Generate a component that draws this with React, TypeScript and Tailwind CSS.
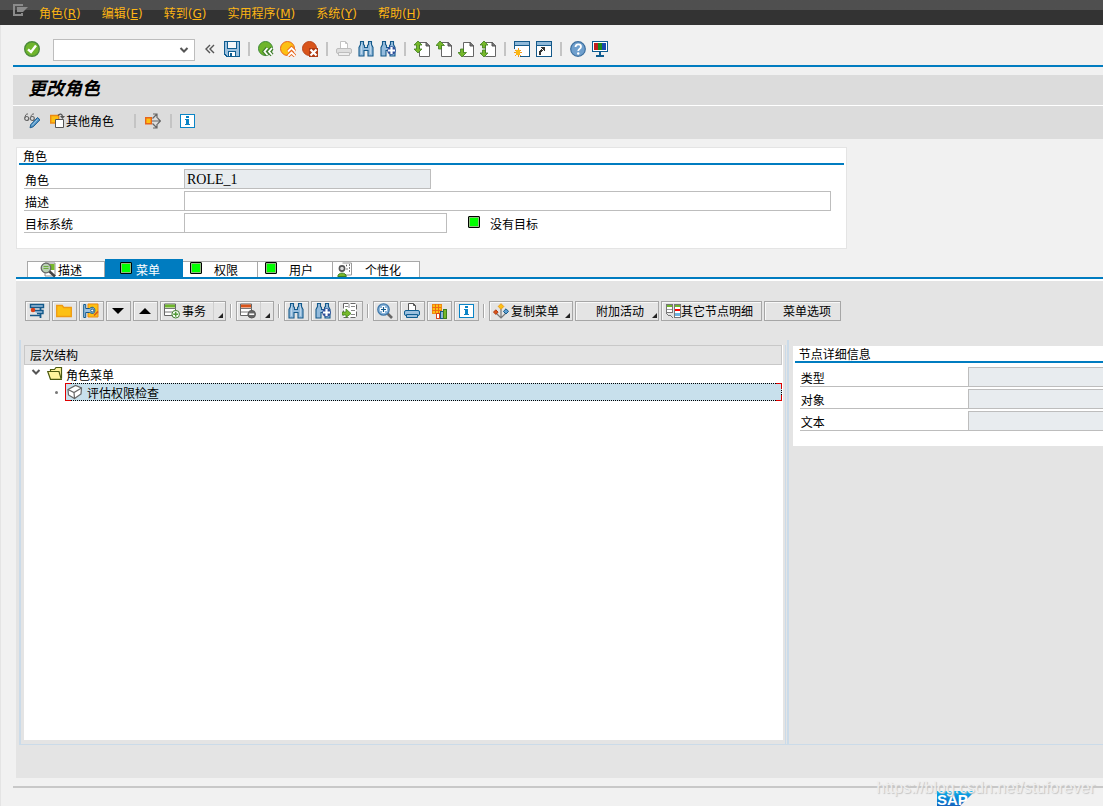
import type { ReactNode } from 'react';

interface ChildrenProps {
  readonly children?: ReactNode;
}

function Icon({ children, crisp = false }: ChildrenProps & { crisp?: boolean }) {
  return (
    <svg
      width="16"
      height="16"
      viewBox="0 0 16 16"
      fill="none"
      aria-hidden="true"
      className="shrink-0"
      shapeRendering={crisp ? 'crispEdges' : 'auto'}
    >
      {children}
    </svg>
  );
}

const CheckIcon = () => (
  <Icon>
    <circle cx="8" cy="8" r="7.3" fill="#6fb52c" stroke="#4b8a3c" strokeWidth="1.4" />
    <path d="M4 8.4 7 11l5-6.4" stroke="#fff" strokeWidth="2.4" />
  </Icon>
);

const SaveIcon = () => (
  <Icon crisp>
    <path d="M0 0h16v16H2l-2-2z" fill="#0f5d91" />
    <path d="M1 1h2v7h10V1h2v14h-3v-5H4v5H3l-2-2z" fill="#9cc0de" />
    <path d="M4 1h8v6H4z" fill="#f4f7fa" />
    <path d="M5 11h6v4H5z" fill="#fff" />
    <path d="M6 12h2v3H6z" fill="#0f5d91" />
  </Icon>
);

const BackIcon = () => (
  <Icon>
    <circle cx="7.5" cy="7.5" r="7" fill="#6fb52c" stroke="#3f8a3a" />
    <path d="M9.5 7l-3 3.5 3 3.5M14 7l-3 3.5 3 3.5" stroke="#3f7d2c" strokeWidth="4" />
    <path d="M9.5 7l-3 3.5 3 3.5M14 7l-3 3.5 3 3.5" stroke="#fff" strokeWidth="1.8" />
  </Icon>
);

const ExitIcon = () => (
  <Icon>
    <circle cx="7.5" cy="7.5" r="7" fill="#fcc013" stroke="#e8641b" />
    <path d="M8 10.5 11.5 7l3.500 3.500M8 15l3.500-3.500L15 15" stroke="#e8641b" strokeWidth="3.6" />
    <path d="M8 10.5 11.5 7l3.500 3.500M8 15l3.500-3.500L15 15" stroke="#fff" strokeWidth="1.8" />
  </Icon>
);

const CancelIcon = () => (
  <Icon>
    <circle cx="7.5" cy="7.5" r="7" fill="#d9541a" stroke="#b9461c" />
    <path d="M7 7h9v9H7z" fill="#b03a12" />
    <path d="m8.5 8.5 6 6m0-6-6 6" stroke="#fff" strokeWidth="2.2" />
  </Icon>
);

const PrintIcon = ({ muted = false }: { muted?: boolean }) => (
  <Icon>
    <path d="M4.5 8V.5h5l2 2V8" fill="#fff" stroke={muted ? '#c2c2c2' : '#555'} />
    <path d="M9.5.5v2h2" stroke={muted ? '#c2c2c2' : '#555'} />
    <rect
      x=".5"
      y="7.5"
      width="15"
      height="5"
      rx="1.5"
      fill={muted ? '#dedede' : '#9cc0de'}
      stroke={muted ? '#bdbdbd' : '#0f5d91'}
    />
    <path d="M2.5 11.500h11v3h-11z" fill={muted ? '#eee' : '#9cc0de'} stroke={muted ? '#bdbdbd' : '#0f5d91'} />
  </Icon>
);

const Barrels = () => (
  <path
    d="M2.5.5h3v3l1 1v2h3v-2l1-1v-3h3v3l1.500 3v8.500h-5V9.500H6v5.500H1V6.500l1.500-3z"
    fill="#94bbdc"
    stroke="#14598a"
    strokeWidth="1.1"
  />
);

const FindIcon = () => (
  <Icon>
    <Barrels />
    <path d="M3.5 3v10M12.500 3v10" stroke="#bcd6ea" />
  </Icon>
);

const FindNextIcon = () => (
  <Icon>
    <Barrels />
    <circle cx="11.5" cy="9.5" r="4.3" fill="#2f4f9a" />
    <path d="M11.5 6v7M8 9.500h7" stroke="#fff" strokeWidth="2.2" />
  </Icon>
);

type PageMove = 'first' | 'prev' | 'next' | 'last';

const PAGE_ARROWS: Record<PageMove, string> = {
  first: 'M4 0l4 4H5.5v4H8l-4 4-4-4h2.5V4H0z',
  prev: 'M4 0l4.500 4.500h-3V8h-3V4.500H0z',
  next: 'M4 16l4.500-4.500h-3V8h-3v3.500H0z',
  last: 'M4 0l4 4H5.500v3h-3V4H0zM4 16l4-4H5.500V9h-3v3H0z',
};

function PageIcon({ move }: { move: PageMove }) {
  return (
    <Icon>
      <path d="M5.5 1.500h7l3 3v11h-10z" fill="#fff" stroke="#666" />
      <path d="M12 1v4h4" fill="#777" stroke="#555" />
      <path d={PAGE_ARROWS[move]} fill="#76b82a" stroke="#3f7d1e" strokeWidth=".8" />
    </Icon>
  );
}

const SessionIcon = () => (
  <Icon crisp>
    <path d="M0 0h16v16H0z" fill="#14598a" />
    <path d="M1 1h14v3H1z" fill="#8fb8d8" />
    <path d="M1 5h14v10H1z" fill="#fff" />
    <path d="M0 8h6v8H0z" fill="#f1f1f1" />
    <path d="M4 7v9M0 11.5h8M1 9l6 6m0-6-6 6" stroke="#f39a1b" />
    <path d="M2 9h4v5H2z" fill="#fcb813" />
  </Icon>
);

const ShortcutIcon = () => (
  <Icon crisp>
    <path d="M0 0h16v16H0z" fill="#14598a" />
    <path d="M1 1h14v3H1z" fill="#8fb8d8" />
    <path d="M1 5h14v10H1z" fill="#fff" />
    <path d="M3.500 14c0-3 1-4 3-5" stroke="#333" strokeWidth="2" />
    <path d="M4 6h5v5z" fill="#333" />
  </Icon>
);

const HelpIcon = () => (
  <Icon>
    <circle cx="8" cy="8" r="7.3" fill="#6f9fcd" stroke="#3c6f9f" strokeWidth="1.2" />
    <path d="M5.5 6c0-3.500 5.500-3.200 5.500-.3C11 7.800 8.200 8 8.200 10" stroke="#fff" strokeWidth="1.8" />
    <circle cx="8.2" cy="12.5" r="1.2" fill="#fff" />
  </Icon>
);

const MonitorIcon = () => (
  <Icon crisp>
    <path d="M0 0h16v11H0z" fill="#0f5d91" />
    <path d="M1 1h14v9H1z" fill="#fff" />
    <path d="M2 2h4v7H2z" fill="#c21d1d" />
    <path d="M6 2h4v7H6z" fill="#1b8a1b" />
    <path d="M10 2h4v7h-4z" fill="#1749b0" />
    <path d="M7 11h2v3h3v2H4v-2h3z" fill="#0f5d91" />
  </Icon>
);

const DisplayEditIcon = () => (
  <Icon>
    <path d="M1 5C1 2 2.500.500 4 1M7 4c0-2 1.500-3.500 3-3" stroke="#666" />
    <circle cx="2.700" cy="5.500" r="2" stroke="#666" strokeWidth="1.2" />
    <circle cx="8.300" cy="5.500" r="2" stroke="#666" strokeWidth="1.2" />
    <path d="m6 14.800.8-3.300 6.700-7L16 6.800l-6.800 7z" fill="#4d93c6" stroke="#215f91" />
    <path d="m8 12.500 5.500-6" stroke="#a5cbe6" />
  </Icon>
);

const OtherRoleIcon = () => (
  <Icon>
    <path d="M.7 2.500h8v7.500h-8z" fill="#fcc013" stroke="#ee8a12" strokeWidth="1.4" />
    <path d="M5.500 6.500h8v8h-8z" fill="#fff" stroke="#555" />
    <path d="M8 2.500c2-2.500 4-1.500 4.500 1" stroke="#555" strokeWidth="1.3" />
    <path d="M10 3h5l-2.500 3z" fill="#555" />
  </Icon>
);

const DistributeIcon = () => (
  <Icon>
    <path d="M.7 4.700h5.600v6H.7z" fill="#fcc013" stroke="#e8641b" strokeWidth="1.4" />
    <path
      d="M7 8h8M7.500 5.500l4-4M7.500 10.500l4 4M12.500 5l3 3-3 3M8 1h4v4M8 15h4v-4"
      stroke="#666"
      strokeWidth="1.2"
    />
  </Icon>
);

const InfoIcon = () => (
  <Icon crisp>
    <path d="M1 1h14v13H1z" fill="#fff" stroke="#0a84c6" />
    <path d="M7 3h3v2H7zM6 6h4v5h1v1H6v-1h1V7H6z" fill="#0a84c6" />
  </Icon>
);

const SearchDetailIcon = () => (
  <Icon>
    <path d="M5 1h10v13H5z" fill="#fff" stroke="#777" strokeWidth=".8" />
    <path d="M10 2h4.500v6H10z" fill="#76b82a" />
    <circle cx="6" cy="6" r="4.8" fill="#b9cfb4" stroke="#666" strokeWidth="1.3" />
    <path d="M3.5 4.500h5M3.500 6.500h5" stroke="#6fae3e" />
    <path d="m9.5 9.500 5.500 5" stroke="#444" strokeWidth="2.5" />
  </Icon>
);

const PersonalizeIcon = () => (
  <Icon>
    <path d="M5.5 1h9v12H8" stroke="#999" fill="#fff" />
    <circle cx="5" cy="6.5" r="2.6" fill="#ddd" stroke="#555" strokeWidth="1.6" />
    <path d="M.8 14.500c0-4.500 8.500-4.500 8.500 0z" fill="#76b82a" stroke="#3f7d1e" />
    <path d="M9 3.500h1M12 3h1M12 6h1M9.500 7h1M12 9h1" stroke="#555" strokeWidth="1.4" />
  </Icon>
);

const StructureIcon = () => (
  <Icon>
    <path d="M1.5 1.500h13v3h-13zM4 7.500h10v3H8M1 12.500h11" fill="#9cc0de" stroke="#14598a" strokeWidth="1.4" />
    <path d="M11.5 4v3.500M11.500 10.500V15" stroke="#14598a" strokeWidth="1.8" />
    <circle cx="4" cy="7" r="2.3" fill="#d9421a" />
  </Icon>
);

const FolderIcon = () => (
  <Icon>
    <path d="M.7 2.500h5.500l1.500 2h7.600v9H.7z" fill="#fcc013" stroke="#ee9a12" strokeWidth="1.3" />
  </Icon>
);

const AssignIcon = () => (
  <Icon>
    <path d="M5 1h10v13H5z" fill="#fcc013" stroke="#ee8a12" />
    <path d="M.7 1.500h2v4h4c3-3 6 0 5 3-1 3-3 2-5 1H2.700v5h-2z" fill="#9cc0de" stroke="#14598a" />
    <circle cx="9.2" cy="7.5" r="1.5" fill="#fff" stroke="#14598a" />
    <path d="m11 12.500 4-4" stroke="#d9541a" strokeWidth="1.5" />
  </Icon>
);

const DownIcon = () => (
  <Icon>
    <path d="M2 5h12l-6 6z" fill="#000" />
  </Icon>
);

const UpIcon = () => (
  <Icon>
    <path d="M2 11h12L8 5z" fill="#000" />
  </Icon>
);

function RowIcon({ kind }: { kind: 'insert' | 'delete' }) {
  const add = kind === 'insert';
  return (
    <Icon>
      <path d="M.5 1h11v11.500H.5z" fill="#fff" stroke="#666" />
      <path d="M1 1.500h10v3H1z" fill={add ? '#6fb52c' : '#d9541a'} />
      <path d="M1 5.500h11M1 9h7" stroke="#777" />
      <circle cx="11.7" cy="11.2" r="3.8" fill={add ? '#fff' : '#666'} stroke={add ? '#3f7d2c' : '#555'} />
      <path d="M9.200 11.200h5" stroke={add ? '#4f9b35' : '#fff'} strokeWidth="1.5" />
      {add && <path d="M11.7 8.700v5" stroke="#4f9b35" strokeWidth="1.5" />}
    </Icon>
  );
}

const ExpandIcon = () => (
  <Icon>
    <path d="M1.5.5h13v14h-13z" fill="#fff" stroke="#666" strokeDasharray="5 2" />
    <path d="M9 3.500h4M3 3.500h3M9 7.500h4M9 11.500h4M7 1v4" stroke="#888" />
    <path d="M0 9h4V6l5 4.500-5 4V12H0z" fill="#76b82a" stroke="#3f7d1e" strokeWidth=".8" />
  </Icon>
);

const ZoomIcon = () => (
  <Icon>
    <path d="m10.5 10.500 4.500 4.500" stroke="#666" strokeWidth="2.6" />
    <circle cx="6.5" cy="6.5" r="5.7" fill="#8fb8dc" stroke="#3f79ab" strokeWidth="1.3" />
    <path d="M6.5 3v7M3 6.500h7" stroke="#fff" strokeWidth="3" />
    <path d="M6.5 4v5M4 6.500h5" stroke="#14598a" strokeWidth="1.2" />
  </Icon>
);

const ChartIcon = () => (
  <Icon crisp>
    <path d="M1 1h9v9H1z" fill="#fcc013" stroke="#ee8a12" />
    <path d="M4 1v9M7 1v9M1 4h9M1 7h9" stroke="#ee6a12" />
    <path d="M5 10h3v5H5z" fill="#fff" stroke="#d9421a" />
    <path d="M9 8h3v7H9z" fill="#8fb8d8" stroke="#14598a" />
    <path d="M12 6h3v9h-3z" fill="#76b82a" stroke="#3f7d1e" />
  </Icon>
);

const CopyMenuIcon = () => (
  <Icon>
    <path d="M8 6v9M3 10l5 5 5-5" stroke="#777" strokeWidth="1.2" />
    <path d="m8 .7 2.800 2.800L8 6.300 5.200 3.500z" fill="#fcc013" stroke="#ee9a12" />
    <path d="m2.800 6.800 2.300 2.300-2.300 2.300L.500 9.100z" fill="#d9541a" stroke="#b03a12" />
    <path d="m13 5.800 2.600 2.600L13 11l-2.600-2.600z" fill="#5f9fd0" stroke="#14598a" />
  </Icon>
);

const NodeDetailIcon = () => (
  <Icon crisp>
    <path d="M1 1h6v8H1zM9 1h6v13H9z" fill="#fff" stroke="#777" />
    <path d="M2 2h5v2H2zM10 2h5v2h-5z" fill="#6fb52c" />
    <path d="M10 6h5v2h-5z" fill="#f00" />
    <path d="M10 10h5v3h-5z" fill="#6fb4e0" />
    <path d="M2 6.500h5" stroke="#999" />
    <path d="M1 10.500l7 4" stroke="#777" strokeDasharray="2 1" />
  </Icon>
);

const OpenFolderIcon = () => (
  <Icon>
    <path d="M3.500 6V3.500h4L9 1.500h5.500v11" fill="#fff59c" stroke="#4c5a10" strokeWidth="1.2" />
    <path d="M.7 5.500H12l2.300 7.800H3.500z" fill="#fff59c" stroke="#4c5a10" strokeWidth="1.2" />
  </Icon>
);

const BoxIcon = () => (
  <Icon>
    <path d="M1 5.500 8.500 1.500l6 2.500-.5 6-6.500 4.500L1.500 11z" fill="#fff" stroke="#666" strokeWidth="1.2" />
    <path d="M1 5.500 7 8.500l7.500-4.500M7 8.500l.5 6" stroke="#666" strokeWidth="1.2" />
  </Icon>
);

function ChevronDown({ className = '' }: { className?: string }) {
  return (
    <svg width="10" height="6" viewBox="0 0 10 6" fill="none" aria-hidden="true" className={className}>
      <path d="m1.5 1 3.500 3.500L8.500 1" stroke="#555" strokeWidth="2" />
    </svg>
  );
}

const Lamp = () => (
  <span className="block size-3 shrink-0 rounded-[1px] border border-black bg-[#00ff00] inset-ring inset-ring-[#8fbf7f]" />
);

const MENUS = [
  { label: '角色', hotkey: 'R' },
  { label: '编辑', hotkey: 'E' },
  { label: '转到', hotkey: 'G' },
  { label: '实用程序', hotkey: 'M' },
  { label: '系统', hotkey: 'Y' },
  { label: '帮助', hotkey: 'H' },
];

function MenuBar() {
  return (
    <header className="flex h-[25px] items-center bg-linear-to-b from-[#4f4f4f] from-40% to-[#333333] to-40% pl-3">
      <svg width="16" height="14" viewBox="0 0 16 14" fill="none" aria-hidden="true" className="mr-[11px] mb-1.5 shrink-0">
        <path d="M11 2H2v10h8v-2" stroke="#8b8b8b" strokeWidth="2" />
        <path d="M5 4h11l-5 5H5z" fill="#8b8b8b" />
      </svg>
      <nav className="flex gap-[21px] pt-0.5 whitespace-nowrap text-[#fdb515]">
        {MENUS.map((menu) => (
          <button key={menu.label} type="button">
            {menu.label}({<u>{menu.hotkey}</u>})
          </button>
        ))}
      </nav>
    </header>
  );
}

interface Tool {
  label: string;
  icon: ReactNode;
}

const TOOL_GROUPS: Tool[][] = [
  [{ label: '保存', icon: <SaveIcon /> }],
  [
    { label: '返回', icon: <BackIcon /> },
    { label: '退出', icon: <ExitIcon /> },
    { label: '取消', icon: <CancelIcon /> },
  ],
  [
    { label: '打印', icon: <PrintIcon muted /> },
    { label: '查找', icon: <FindIcon /> },
    { label: '查找下一个', icon: <FindNextIcon /> },
  ],
  [
    { label: '第一页', icon: <PageIcon move="first" /> },
    { label: '上一页', icon: <PageIcon move="prev" /> },
    { label: '下一页', icon: <PageIcon move="next" /> },
    { label: '最后一页', icon: <PageIcon move="last" /> },
  ],
  [
    { label: '新建会话', icon: <SessionIcon /> },
    { label: '创建快捷方式', icon: <ShortcutIcon /> },
  ],
  [
    { label: '帮助', icon: <HelpIcon /> },
    { label: '定制本地布局', icon: <MonitorIcon /> },
  ],
];

const Divider = () => <span className="mx-0.5 h-3.5 w-0.5 shrink-0 bg-[#c4c4c4]" />;

function SystemToolbar() {
  return (
    <div className="flex items-start border-b-2 border-[#007cc0] pt-3.5 pb-1 pl-[11px]">
      <button type="button" aria-label="回车" className="mt-0.5">
        <CheckIcon />
      </button>
      <div className="relative ml-[13px]">
        <select
          aria-label="命令"
          className="block h-[22px] w-[142px] appearance-none border border-[#bdbdbd] bg-white px-1 outline-none"
        />
        <ChevronDown className="pointer-events-none absolute top-2 right-1.5" />
      </div>
      <button type="button" aria-label="隐藏命令字段" className="mt-[5px] mr-[9px] ml-2.5">
        <svg width="10" height="10" viewBox="0 0 10 10" fill="none" aria-hidden="true">
          <path d="M5 1 1 5l4 4M9 1 5 5l4 4" stroke="#555" strokeWidth="1.4" />
        </svg>
      </button>
      <div className="mt-0.5 flex items-center gap-1.5">
        {TOOL_GROUPS.map((group, i) => (
          <div key={group[0].label} className="flex items-center gap-1.5">
            {i > 0 && <Divider />}
            {group.map((tool) => (
              <button key={tool.label} type="button" aria-label={tool.label}>
                {tool.icon}
              </button>
            ))}
          </div>
        ))}
      </div>
    </div>
  );
}

function TitleArea() {
  return (
    <div className="mt-2 bg-[#dcdcdc]">
      <h1 className="h-[31px] border-b border-white pl-[15px] text-[18px] leading-7 font-bold italic">更改角色</h1>
      <div className="flex h-[33px] items-center pb-1 pl-[11px]">
        <button type="button" aria-label="显示/更改">
          <DisplayEditIcon />
        </button>
        <button type="button" className="mr-[18px] ml-2.5 flex items-center">
          <OtherRoleIcon />
          <span className="pt-[3px]">其他角色</span>
        </button>
        <Divider />
        <button type="button" aria-label="传输" className="mx-[7px]">
          <DistributeIcon />
        </button>
        <Divider />
        <button type="button" aria-label="信息" className="ml-[5px]">
          <InfoIcon />
        </button>
      </div>
    </div>
  );
}

interface FieldProps extends ChildrenProps {
  readonly id: string;
  readonly label: string;
  readonly labelClass: string;
  readonly inputClass: string;
  readonly value?: string;
  readonly readOnly?: boolean;
}

function Field({ id, label, labelClass, inputClass, value, readOnly, children }: FieldProps) {
  return (
    <div className="flex h-5">
      <label htmlFor={id} className={`shrink-0 border-b border-[#bdbdbd] pt-1 leading-4 ${labelClass}`}>
        {label}
      </label>
      <input
        id={id}
        type="text"
        defaultValue={value}
        readOnly={readOnly}
        className={`min-w-0 border border-[#bdbdbd] px-0.5 pt-0.5 font-['Liberation_Serif','Noto_Sans_CJK_SC',serif] text-[14px] leading-4 outline-none ${
          readOnly ? 'bg-[#e8ecef]' : 'bg-white'
        } ${inputClass}`}
      />
      {children}
    </div>
  );
}

const BoxHeading = ({ children }: ChildrenProps) => (
  <h2 className="h-[17px] border-b-2 border-[#007cc0] pl-1 leading-[18px]">{children}</h2>
);

function RoleBox() {
  return (
    <section className="mt-2 ml-[3px] w-full max-w-[831px] border border-[#e4e4e4] bg-white px-0.5 pb-[15px]">
      <BoxHeading>角色</BoxHeading>
      <div className="flex flex-col gap-0.5 pt-1 pr-[13px] pl-[5px]">
        <Field id="role" label="角色" labelClass="w-40 pl-px" inputClass="w-[247px]" value="ROLE_1" readOnly />
        <Field id="description" label="描述" labelClass="w-40 pl-px" inputClass="flex-1" />
        <Field id="target" label="目标系统" labelClass="w-40 pl-px" inputClass="w-[263px]">
          <span className="ml-[21px] flex gap-2.5 pt-[3px]">
            <Lamp />
            <span className="pt-px leading-4">没有目标</span>
          </span>
        </Field>
      </div>
    </section>
  );
}

function TabStrip() {
  const tab = 'flex h-4 border-t border-r border-[#a8a8a8] bg-white leading-[18px]';
  return (
    <div role="tablist" className="mt-2.5 ml-[3px] flex items-end border-b-2 border-[#007cc0] pl-[11px]">
      <button type="button" role="tab" className={`${tab} w-[78px] gap-0.5 border-l pl-3`}>
        <SearchDetailIcon />
        描述
      </button>
      <button
        type="button"
        role="tab"
        aria-selected="true"
        className="flex h-[18px] w-[78px] gap-1 bg-[#007cc0] pt-[3px] pl-[15px] text-white"
      >
        <Lamp />
        <span className="leading-[18px]">菜单</span>
      </button>
      <button type="button" role="tab" className={`${tab} w-[75px] gap-3 pl-[7px]`}>
        <Lamp />
        权限
      </button>
      <button type="button" role="tab" className={`${tab} w-[75px] gap-3 pl-[7px]`}>
        <Lamp />
        用户
      </button>
      <button type="button" role="tab" className={`${tab} w-[87px] gap-3 pl-1`}>
        <PersonalizeIcon />
        个性化
      </button>
    </div>
  );
}

const Corner = () => (
  <svg width="5" height="5" viewBox="0 0 5 5" aria-hidden="true" className="mb-0.5 self-end">
    <path d="M5 0v5H0z" fill="#222" />
  </svg>
);

const BUTTON =
  'flex h-5 shrink-0 items-center border border-[#a6a6a6] bg-[#e4e4e4] pl-[3px] leading-[18px] whitespace-nowrap shadow-[inset_1px_1px_0_#f8f8f8]';

function IconButton({ label, children }: ChildrenProps & { label: string }) {
  return (
    <button type="button" aria-label={label} className={`${BUTTON} w-[25px]`}>
      {children}
    </button>
  );
}

const Groove = () => <span className="mx-0.5 h-3.5 w-0.5 shrink-0 border-r border-l border-r-white border-l-[#a6a6a6]" />;

function MenuToolbar() {
  return (
    <div className="flex items-center gap-0.5 overflow-hidden pt-5 pl-[9px]">
      <IconButton label="层次结构">
        <StructureIcon />
      </IconButton>
      <IconButton label="创建文件夹">
        <FolderIcon />
      </IconButton>
      <IconButton label="更改节点">
        <AssignIcon />
      </IconButton>
      <IconButton label="下移">
        <DownIcon />
      </IconButton>
      <IconButton label="上移">
        <UpIcon />
      </IconButton>
      <button type="button" className={`${BUTTON} w-[66px]`}>
        <RowIcon kind="insert" />
        <span className="ml-0.5 pt-0.5">事务</span>
        <span className="mr-1 ml-[7px] h-full border-l border-[#cfcfcf]" />
        <Corner />
      </button>
      <Groove />
      <button type="button" aria-label="删除节点" className={`${BUTTON} w-[38px]`}>
        <RowIcon kind="delete" />
        <span className="mr-1 ml-1 h-full border-l border-[#cfcfcf]" />
        <Corner />
      </button>
      <Groove />
      <IconButton label="查找">
        <FindIcon />
      </IconButton>
      <IconButton label="查找下一个">
        <FindNextIcon />
      </IconButton>
      <IconButton label="展开">
        <ExpandIcon />
      </IconButton>
      <Groove />
      <IconButton label="明细">
        <ZoomIcon />
      </IconButton>
      <IconButton label="打印">
        <PrintIcon />
      </IconButton>
      <IconButton label="图表">
        <ChartIcon />
      </IconButton>
      <IconButton label="信息">
        <InfoIcon />
      </IconButton>
      <Groove />
      <button type="button" className={`${BUTTON} w-[84px]`}>
        <CopyMenuIcon />
        <span className="mr-1.5 ml-0.5 pt-0.5">复制菜单</span>
        <Corner />
      </button>
      <button type="button" className={`${BUTTON} w-[84px]`}>
        <span className="mr-2 ml-[17px] pt-0.5">附加活动</span>
        <Corner />
      </button>
      <button type="button" className={`${BUTTON} w-[101px]`}>
        <NodeDetailIcon />
        <span className="pt-0.5">其它节点明细</span>
      </button>
      <button type="button" className={`${BUTTON} w-[77px]`}>
        <span className="ml-[15px] pt-0.5">菜单选项</span>
      </button>
    </div>
  );
}

function Tree() {
  return (
    <div className="flex-1 bg-white" role="tree" aria-label="层次结构">
      <div className="mr-px h-5 border border-[#c8c8c8] bg-[#e4e4e4] pl-[5px] leading-5">层次结构</div>
      <div role="treeitem" aria-expanded="true" className="flex h-[18px] items-center pl-[7px]">
        <ChevronDown className="mb-1" />
        <span className="mr-[3px] ml-1.5">
          <OpenFolderIcon />
        </span>
        <span className="pt-[3px]">角色菜单</span>
      </div>
      <div className="mr-px flex h-[18px] items-center">
        <span className="mr-[7px] ml-[31px] size-[3px] shrink-0 rounded-full bg-[#777]" />
        <div
          role="treeitem"
          aria-selected="true"
          className="relative flex h-full flex-1 items-center border border-dotted border-black bg-[#c8e0ec] pl-px"
        >
          <BoxIcon />
          <span className="ml-1 pt-[3px]">评估权限检查</span>
          <span className="absolute -top-px -bottom-px -left-px w-1.5 border border-r-0 border-[#e00000]" />
          <span className="absolute -top-px -right-px size-1.5 border-t border-r border-[#e00000]" />
          <span className="absolute -right-px -bottom-px size-1.5 border-r border-b border-[#e00000]" />
        </div>
      </div>
    </div>
  );
}

const NODE_FIELDS = [
  { id: 'node-type', label: '类型' },
  { id: 'node-object', label: '对象' },
  { id: 'node-text', label: '文本' },
];

function NodeDetails() {
  return (
    <section className="bg-white pb-[15px] pl-0.5">
      <BoxHeading>节点详细信息</BoxHeading>
      <div className="flex flex-col gap-0.5 pt-1 pl-[5px]">
        {NODE_FIELDS.map((field) => (
          <Field
            key={field.id}
            id={field.id}
            label={field.label}
            labelClass="w-[168px] pl-px"
            inputClass="flex-1 border-r-0"
            readOnly
          />
        ))}
      </div>
    </section>
  );
}

function SapLogo() {
  return (
    <svg width="38" height="19" viewBox="0 0 38 19" role="img" aria-label="SAP">
      <defs>
        <linearGradient id="sap" x1="0" y1="0" x2="0" y2="1">
          <stop offset="0" stopColor="#00aeef" />
          <stop offset="1" stopColor="#1b4fb0" />
        </linearGradient>
      </defs>
      <path d="M0 0h38L19 19H0z" fill="url(#sap)" />
      <text x="0" y="14" fill="#fff" fontFamily="Liberation Sans, sans-serif" fontSize="15" fontWeight="700">
        SAP
      </text>
    </svg>
  );
}

export default function App() {
  return (
    <div className="relative flex min-h-screen flex-col overflow-hidden bg-[#f1f1f1] font-['DejaVu_Sans','Noto_Sans_CJK_SC',sans-serif] text-[12px] leading-4 text-black">
      <MenuBar />
      <div className="flex flex-1 flex-col border-l border-[#e4e4e4] pl-3">
        <SystemToolbar />
        <TitleArea />
        <RoleBox />
        <TabStrip />
        <main className="ml-[3px] flex flex-1 flex-col border-t-2 border-white bg-[#e4e4e4] pb-[33px]">
          <MenuToolbar />
          <div className="mt-[19px] ml-[3px] flex flex-1 border-b border-[#cbdbe9]">
            <div className="flex w-[71%] border-r-2 border-l-2 border-[#cbdbe9] pt-[5px]">
              <div className="mr-px flex flex-1 border-r border-[#cbdbe9] pr-0.5 pb-1 pl-[3px]">
                <Tree />
              </div>
            </div>
            <div className="min-w-0 flex-1 pt-1.5 pl-1">
              <NodeDetails />
            </div>
          </div>
        </main>
        <footer className="h-7 overflow-hidden pt-2">
          <div className="flex justify-end border-t-2 border-[#c8c8c8] pt-[3px] pr-32">
            <SapLogo />
          </div>
        </footer>
      </div>
      <p className="absolute right-2 bottom-2 font-['Liberation_Sans',sans-serif] text-[16px] leading-5 text-[#eeeeee] text-shadow-[1px_1px_1px_#c4c4c4]">
        https://blog.csdn.net/stuforever
      </p>
    </div>
  );
}
